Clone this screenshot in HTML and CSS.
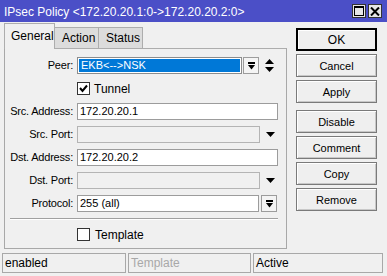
FILE: index.html
```html
<!DOCTYPE html>
<html>
<head>
<meta charset="utf-8">
<link rel="stylesheet" href="styles.css">
</head>
<body>
<div class="window">
  <div class="titlebar">
    <span class="title">IPsec Policy &lt;172.20.20.1:0-&gt;172.20.20.2:0&gt;</span>
    <div class="tb-btns">
      <span class="tb-btn"><svg width="10" height="10" viewBox="0 0 10 10"><rect x="0.5" y="0.5" width="9" height="9" fill="none" stroke="#000"/><rect x="0" y="0" width="10" height="2" fill="#000"/></svg></span>
      <span class="tb-btn"><svg width="10" height="9" viewBox="0 0 10 9"><path d="M1 0.5 L9 8.5 M9 0.5 L1 8.5" stroke="#000" stroke-width="2"/></svg></span>
    </div>
  </div>
  <div class="body">
    <div class="left">
      <div class="tabs">
        <div class="tab active">General</div>
        <div class="tab">Action</div>
        <div class="tab">Status</div>
      </div>
      <div class="panel">
        <div class="form">
          <label class="lbl">Peer:</label>
          <div class="ctl">
            <div class="field selected"><span>EKB&lt;--&gt;NSK</span></div>
            <span class="dd-btn"><svg width="7" height="8" viewBox="0 0 7 8"><rect x="0" y="0" width="7" height="2" fill="#000"/><polygon points="0,3 7,3 3.5,7.5" fill="#000"/></svg></span>
            <span class="updown"><svg width="9" height="13" viewBox="0 0 9 13"><polygon points="4.5,0 9,5 0,5" fill="#000"/><polygon points="0,8 9,8 4.5,13" fill="#000"/></svg></span>
          </div>

          <span></span>
          <div class="ctl check-row">
            <span class="checkbox"><svg width="11" height="11" viewBox="0 0 11 11"><path d="M2 5 L4.5 8 L9 2.5" fill="none" stroke="#000" stroke-width="2"/></svg></span>
            <span class="check-label">Tunnel</span>
          </div>

          <label class="lbl">Src. Address:</label>
          <div class="ctl"><div class="field">172.20.20.1</div></div>

          <label class="lbl">Src. Port:</label>
          <div class="ctl">
            <div class="field disabled"></div>
            <span class="arrow-only"><svg width="9" height="5" viewBox="0 0 9 5"><polygon points="0,0 9,0 4.5,5" fill="#000"/></svg></span>
          </div>

          <label class="lbl">Dst. Address:</label>
          <div class="ctl"><div class="field">172.20.20.2</div></div>

          <label class="lbl">Dst. Port:</label>
          <div class="ctl">
            <div class="field disabled"></div>
            <span class="arrow-only"><svg width="9" height="5" viewBox="0 0 9 5"><polygon points="0,0 9,0 4.5,5" fill="#000"/></svg></span>
          </div>

          <label class="lbl">Protocol:</label>
          <div class="ctl">
            <div class="field">255 (all)</div>
            <span class="dd-btn proto"><svg width="7" height="8" viewBox="0 0 7 8"><rect x="0" y="0" width="7" height="2" fill="#000"/><polygon points="0,3 7,3 3.5,7.5" fill="#000"/></svg></span>
          </div>
        </div>
        <div class="sep"></div>
        <div class="template-row">
          <span class="checkbox"></span>
          <span class="check-label">Template</span>
        </div>
      </div>
    </div>
    <div class="buttons">
      <div class="btn default">OK</div>
      <div class="btn">Cancel</div>
      <div class="btn">Apply</div>
      <div class="btn group">Disable</div>
      <div class="btn">Comment</div>
      <div class="btn">Copy</div>
      <div class="btn">Remove</div>
    </div>
  </div>
  <div class="status">
    <div class="cell c1">enabled</div>
    <div class="cell c2 dim">Template</div>
    <div class="cell c3">Active</div>
  </div>
</div>
</body>
</html>
```
FILE: styles.css
```css
* { box-sizing: border-box; }
html, body { margin: 0; padding: 0; }
body {
  background: #f0f0f0;
  font-family: "Liberation Sans", Arial, sans-serif;
  font-size: 11px;
  color: #000;
}
.window {
  width: 387px;
  height: 276px;
  background: #f0f0f0;
  display: flex;
  flex-direction: column;
}
.titlebar {
  height: 22px;
  background: #4b4fc7;
  color: #fff;
  display: flex;
  align-items: center;
  padding-left: 4px;
  font-size: 12px;
}
.title { flex: 1; white-space: nowrap; padding-top: 1px; }
.tb-btns { display: flex; gap: 2px; margin-right: 5px; }
.tb-btn {
  width: 14px;
  height: 14px;
  background: #e6e6e6;
  border: 1px solid #333;
  display: flex;
  align-items: center;
  justify-content: center;
}
.body {
  display: flex;
  padding-left: 4px;
  height: 227px;
}
.left { width: 283px; display: flex; flex-direction: column; }
.tabs {
  display: flex;
  height: 26px;
  align-items: flex-end;
  margin-top: 1px;
  margin-bottom: -1px;
  position: relative;
  z-index: 1;
}
.tab {
  height: 21px;
  padding: 0 0 0 7px;
  width: 44px;
  border: 1px solid #adadad;
  border-bottom: none;
  background: #dcdcdc;
  display: flex;
  align-items: center;
  font-size: 12px;
  margin-bottom: 1px;
}
.tab + .tab { border-left: none; }
.tab.active {
  width: 51px;
  height: 26px;
  margin-bottom: 0;
  background: #f0f0f0;
  padding-left: 6px;
  padding-bottom: 1px;
}
.panel {
  height: 201px;
  border: 1px solid #a8a8a8;
  border-top-color: #adadad;
  background: #f0f0f0;
  padding: 8px 8px 0 0;
}
.form {
  display: grid;
  grid-template-columns: 68px 1fr;
  column-gap: 4px;
  row-gap: 6px;
  grid-auto-rows: 17px;
}
.lbl {
  text-align: right;
  line-height: 17px;
  white-space: nowrap;
  letter-spacing: -0.2px;
}
.ctl { display: flex; align-items: center; height: 17px; }
.field {
  flex: 1;
  height: 17px;
  border: 1px solid #9c9c9c;
  background: #fff;
  padding-left: 2px;
  line-height: 15px;
  white-space: nowrap;
}
.field.selected {
  background: #0078d7;
  color: #fff;
  padding: 0;
  border-color: #8c8c8c;
}
.field.selected span {
  display: block;
  height: 15px;
  border: 1px solid #fff;
  padding-left: 2px;
  line-height: 13px;
}
.field.disabled { background: #f0f0f0; border-color: #b4b4b4; }
.dd-btn {
  width: 16px;
  height: 17px;
  margin-left: 1px;
  border: 1px solid #9c9c9c;
  background: #f4f4f4;
  display: flex;
  align-items: center;
  justify-content: center;
}
.dd-btn.proto { margin-left: 2px; margin-right: 1px; }
.updown {
  width: 19px;
  display: flex;
  justify-content: center;
  padding-left: 2px;
}
.arrow-only {
  width: 18px;
  display: flex;
  justify-content: center;
  padding-left: 2px;
}
.check-row { gap: 4px; }
.checkbox {
  width: 13px;
  height: 13px;
  border: 1px solid #333;
  background: #fff;
  display: flex;
  align-items: center;
  justify-content: center;
}
.check-label { font-size: 12px; }
.sep {
  margin: 6px 0 0 5px;
  height: 2px;
  border-top: 1px solid #a0a0a0;
  border-bottom: 1px solid #fff;
}
.template-row {
  display: flex;
  align-items: center;
  gap: 5px;
  margin-top: 6px;
  height: 17px;
  padding-left: 72px;
}
.buttons {
  margin-left: 9px;
  margin-top: 6px;
  width: 81px;
  display: flex;
  flex-direction: column;
  gap: 3px;
}
.btn {
  height: 23px;
  border: 1px solid #7a7a7a;
  background: #efefef;
  box-shadow: inset 1px 1px 0 #fff, inset -1px -1px 0 #c8c8c8;
  display: flex;
  align-items: center;
  justify-content: center;
  font-size: 11px;
}
.btn.default {
  border: 1px solid #000;
  box-shadow: inset 0 0 0 1px #000, inset 2px 2px 0 #fff;
  font-size: 12px;
}
.btn.group { margin-top: 4px; }
.status {
  display: flex;
  margin-top: 4px;
  padding-left: 2px;
  gap: 2px;
  height: 20px;
}
.cell {
  height: 20px;
  border: 1px solid #a8a8a8;
  padding-left: 2px;
  line-height: 18px;
  font-size: 12px;
}
.c1 { width: 124px; }
.c2 { width: 123px; }
.c3 { width: 130px; }
.dim { color: #a8a8a8; }
```
